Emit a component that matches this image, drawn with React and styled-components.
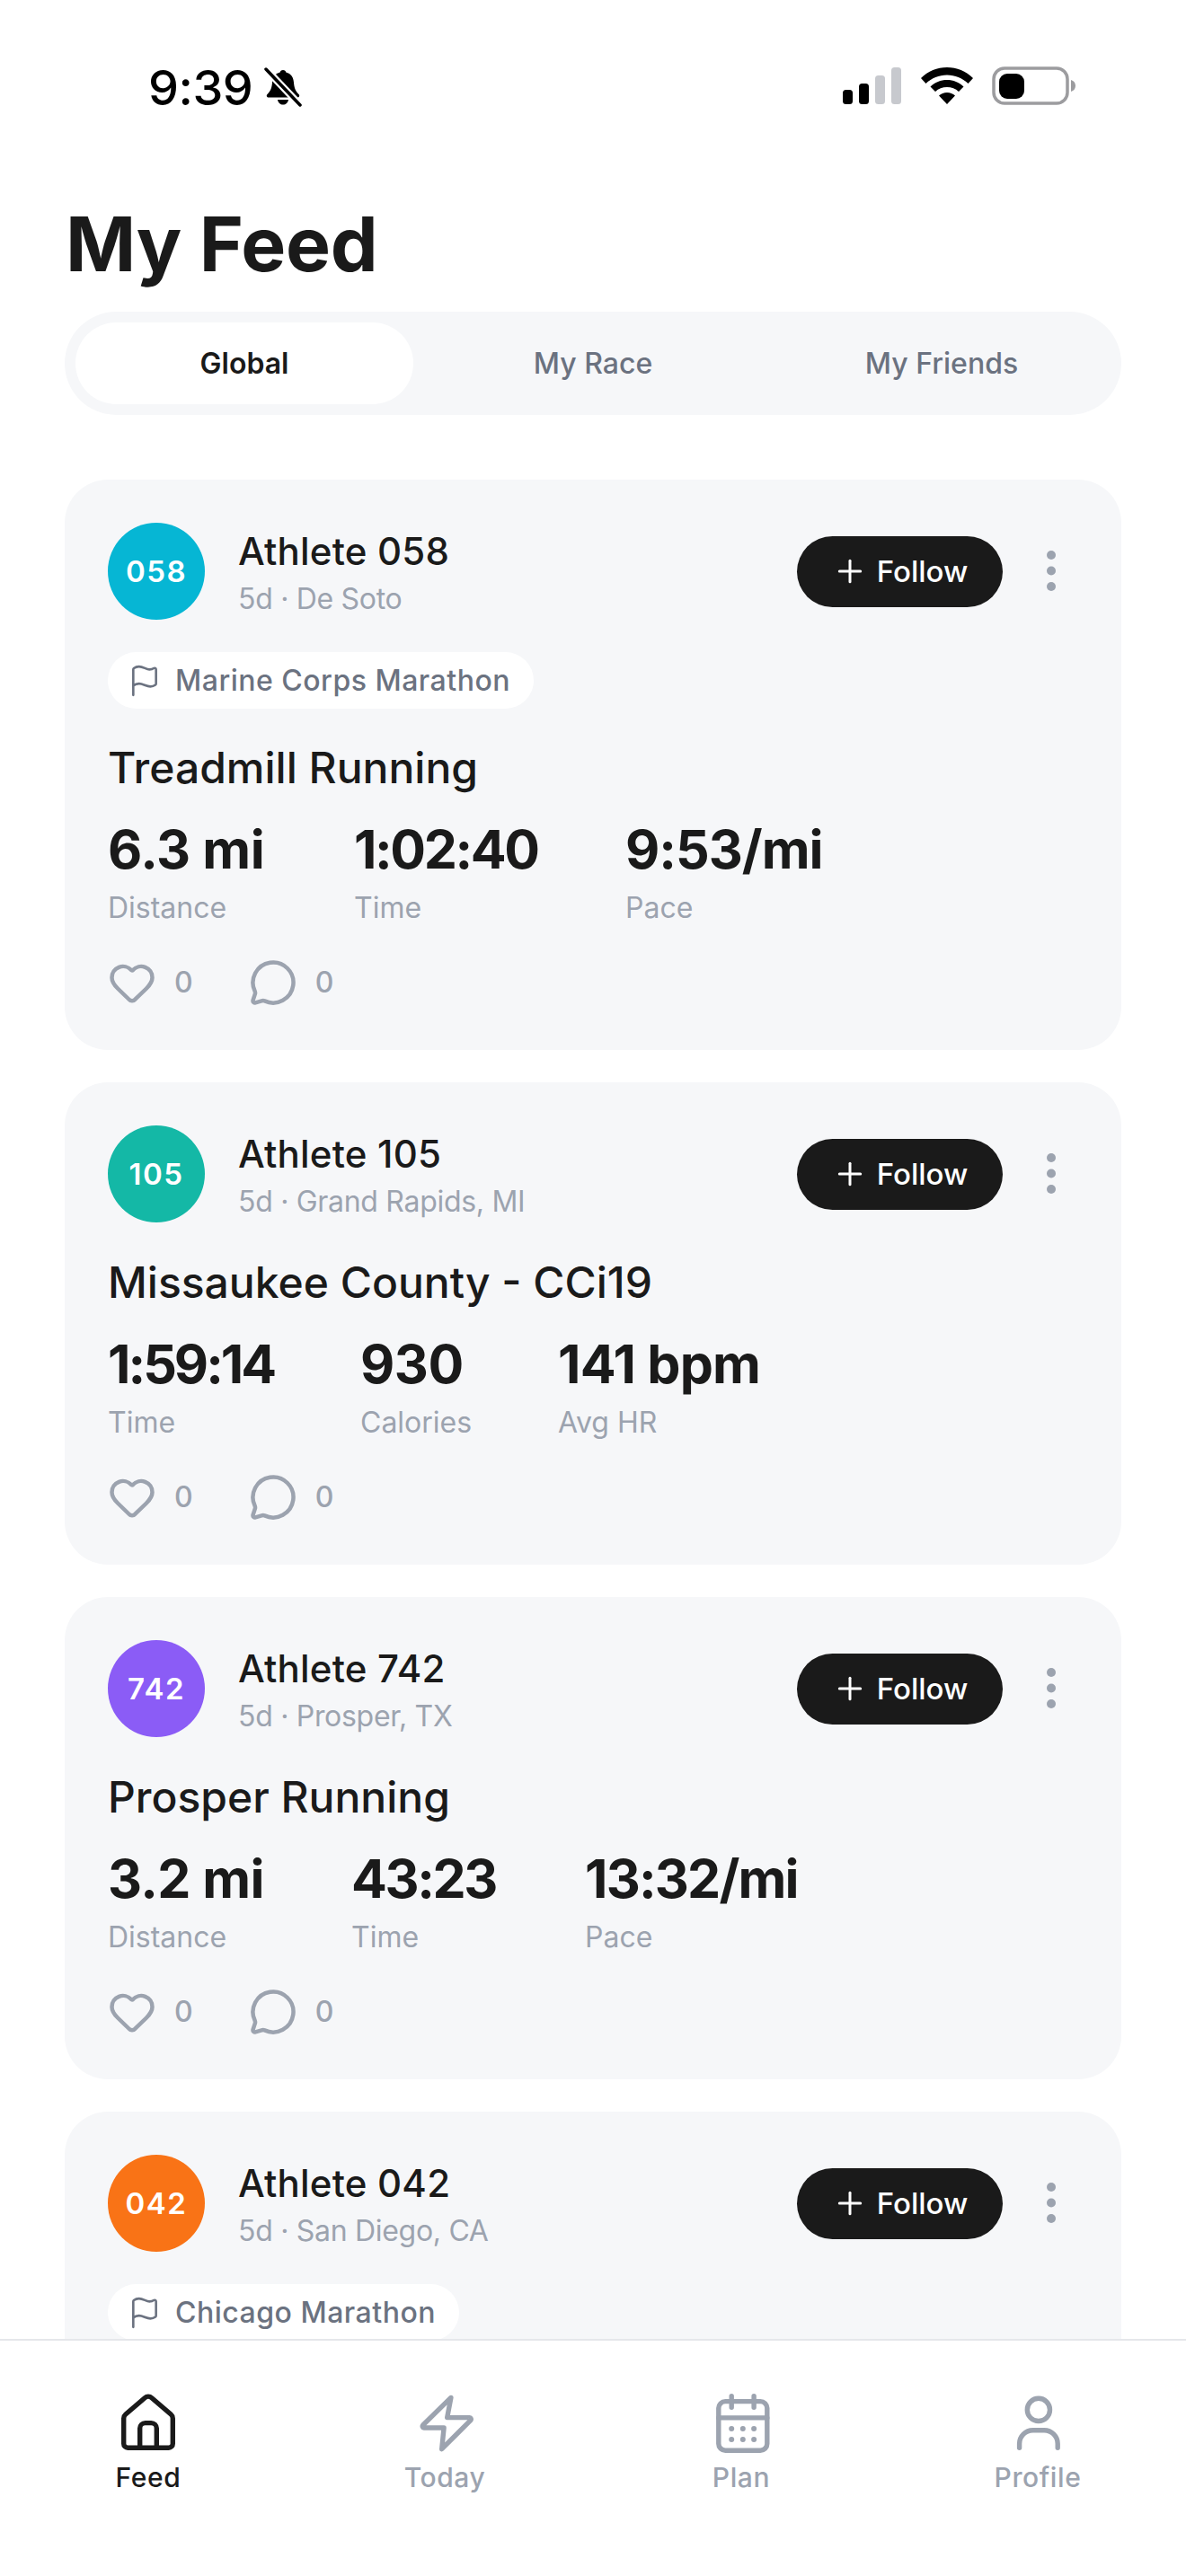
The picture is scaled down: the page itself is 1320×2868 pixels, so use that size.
import React from 'react';
import styled, { createGlobalStyle } from 'styled-components';
import { Flag, Heart, MessageCircle, Plus } from 'lucide-react';

const GlobalStyle = createGlobalStyle`
  html, body { margin: 0; padding: 0; background: #fff; }
  body { font-family: Inter, "Noto Sans", sans-serif; color: #1a1a1a; }
  * { box-sizing: border-box; }
`;

const Screen = styled.div`
  width: 1320px;
  height: 2868px;
  display: flex;
  flex-direction: column;
  overflow: hidden;
  background: #fff;
`;

const StatusBar = styled.div`
  height: 130px;
  flex: none;
  padding: 70px 122px 0 165px;
  display: flex;
  justify-content: space-between;
  align-items: flex-start;
`;

const Time = styled.div`
  display: flex;
  align-items: center;
  gap: 13px;
  font-size: 54px;
  line-height: 56px;
  font-weight: 500;
  letter-spacing: -0.5px;
  color: #000;
`;

const StatusIcons = styled.div`
  display: flex;
  align-items: center;
  gap: 21px;
  padding-top: 4px;
`;

const Title = styled.h1`
  margin: 112px 0 0 73px;
  height: 60px;
  font-size: 84px;
  line-height: 60px;
  font-weight: 700;
  letter-spacing: -0.3px;
  color: #1a1a1a;
`;

const Tabs = styled.div`
  margin: 45px 72px 0;
  height: 115px;
  flex: none;
  padding: 12px;
  border-radius: 58px;
  background: #f6f7f9;
  display: grid;
  grid-template-columns: repeat(3, 1fr);
  gap: 12px;
`;

const Tab = styled.div`
  display: flex;
  align-items: center;
  justify-content: center;
  border-radius: 46px;
  font-size: 32px;
  font-weight: ${({ $active }) => ($active ? 600 : 500)};
  color: ${({ $active }) => ($active ? '#1a1a1a' : '#6b7280')};
  background: ${({ $active }) => ($active ? '#fff' : 'transparent')};
`;

const Feed = styled.div`
  flex: 1;
  min-height: 0;
  margin-top: 72px;
  padding: 0 72px;
  display: flex;
  flex-direction: column;
  gap: 36px;
  overflow: hidden;
`;

const Card = styled.article`
  flex: none;
  padding: 48px;
  border-radius: 48px;
  background: #f6f7f9;
`;

const CardHead = styled.div`
  display: flex;
  align-items: center;
`;

const Avatar = styled.div`
  width: 108px;
  height: 108px;
  flex: none;
  border-radius: 50%;
  display: flex;
  align-items: center;
  justify-content: center;
  font-size: 33px;
  font-weight: 600;
  letter-spacing: 1.5px;
  color: #fff;
  background: ${({ $color }) => $color};
`;

const Who = styled.div`
  flex: 1;
  margin-left: 37px;
  padding-top: 4px;
`;

const Name = styled.div`
  font-size: 42px;
  line-height: 50px;
  font-weight: 500;
  letter-spacing: 0.2px;
  color: #1a1a1a;
`;

const Meta = styled.div`
  margin-top: 7px;
  font-size: 32px;
  line-height: 42px;
  letter-spacing: -0.3px;
  color: #9ca3af;
`;

const FollowButton = styled.button`
  width: 229px;
  height: 79px;
  border: 0;
  border-radius: 40px;
  background: #1a1a1a;
  color: #fff;
  display: flex;
  align-items: center;
  justify-content: center;
  gap: 10px;
  font-family: inherit;
  font-size: 33px;
  font-weight: 500;
  padding: 0;
`;

const MoreButton = styled.div`
  width: 60px;
  margin-left: 24px;
  display: flex;
  justify-content: center;
`;

const RaceChip = styled.div`
  margin-top: 36px;
  height: 63px;
  width: fit-content;
  padding: 0 26px 0 22px;
  border-radius: 32px;
  background: #fff;
  display: flex;
  align-items: center;
  gap: 15px;
  font-size: 32px;
  font-weight: 500;
  letter-spacing: 0.5px;
  color: #6b7280;
`;

const WorkoutTitle = styled.h2`
  margin: ${({ $afterChip }) => ($afterChip ? '37px' : '38px')} 0 0;
  font-size: 48px;
  line-height: 58px;
  font-weight: 500;
  letter-spacing: 0;
  color: #1a1a1a;
`;

const Stats = styled.div`
  margin-top: 28px;
  display: grid;
  grid-template-columns: ${({ $columns }) => $columns};
`;

const Stat = styled.div`
  display: flex;
  flex-direction: column;
`;

const StatValue = styled.div`
  font-size: 59px;
  line-height: 68px;
  font-weight: 700;
  letter-spacing: ${({ $tracking }) => $tracking}px;
  color: #1a1a1a;
`;

const StatLabel = styled.div`
  margin-top: 11px;
  font-size: 32px;
  line-height: 40px;
  color: #9ca3af;
`;

const Actions = styled.div`
  margin-top: 36px;
  display: flex;
  align-items: center;
  gap: 62px;
`;

const Action = styled.div`
  display: flex;
  align-items: center;
  gap: 20px;
  font-size: 32px;
  line-height: 54px;
  font-weight: 500;
  color: #9ca3af;
`;

const BottomNav = styled.nav`
  flex: none;
  height: 264px;
  border-top: 2px solid #e5e7eb;
  background: #fff;
  display: grid;
  grid-template-columns: repeat(4, 1fr);
  align-items: start;
  padding-top: 55px;
`;

const NavItem = styled.div`
  display: flex;
  flex-direction: column;
  align-items: center;
  gap: 5px;
  color: ${({ $active }) => ($active ? '#1a1a1a' : '#9ca3af')};
`;

const NavLabel = styled.span`
  font-size: 30px;
  line-height: 40px;
  font-weight: 500;
  letter-spacing: 0.6px;
`;

const NavSvg = ({ children }) => (
  <svg width="72" height="72" viewBox="0 0 24 24" fill="none" stroke="currentColor" strokeWidth="1.8" strokeLinecap="round" strokeLinejoin="round">
    {children}
  </svg>
);

const HomeIcon = () => (
  <NavSvg>
    <path d="M2.900 10.500a2 2 0 0 1 .7-1.500L10.700 2.900a2 2 0 0 1 2.600 0L20.400 9a2 2 0 0 1 .7 1.500V19.900a1.500 1.500 0 0 1-1.500 1.500H4.400a1.500 1.500 0 0 1-1.500-1.500z" />
    <path d="M8.900 21.400V14.200a2 2 0 0 1 2-2h2.200a2 2 0 0 1 2 2V21.400" />
  </NavSvg>
);

const BoltIcon = () => (
  <NavSvg>
    <path d="M14.300 2.800 3.900 13a.6.6 0 0 0 .4 1H11.700L10.900 21.900 21.600 11.200a.6.6 0 0 0-.4-1H12.900z" />
  </NavSvg>
);

const CalendarIcon = () => (
  <NavSvg>
    <rect x="3.600" y="4.200" width="18" height="18.200" rx="2.500" />
    <path d="M8.400 2.200v4.200M16.700 2.200v4.200M3.600 10.300h18" />
    <g fill="currentColor" stroke="none">
      <circle cx="8.400" cy="14.300" r="1" />
      <circle cx="12.600" cy="14.300" r="1" />
      <circle cx="16.700" cy="14.300" r="1" />
      <circle cx="8.400" cy="18.300" r="1" />
      <circle cx="12.600" cy="18.300" r="1" />
      <circle cx="16.700" cy="18.300" r="1" />
    </g>
  </NavSvg>
);

const PersonIcon = () => (
  <NavSvg>
    <circle cx="12.300" cy="7.300" r="4.200" />
    <path d="M5.200 21.400v-1.500a5 5 0 0 1 5-5h4.200a5 5 0 0 1 5 5v1.500" />
  </NavSvg>
);

const BellOff = () => (
  <svg width="42" height="46" viewBox="0 0 42 46">
    <path fill="#000" d="M21 3c2 0 3 1.200 3.300 2.600C30 7 32.500 11 33 17c.4 5 1.500 9 5.500 13 1.500 1.500.5 3.500-1.500 3.500H5c-2 0-3-2-1.500-3.500C7.500 26 8.600 22 9 17c.5-6 3-10 8.700-11.400C18 4.200 19 3 21 3z" />
    <path fill="#000" d="M15 36h12c-.5 3.500-3 5.500-6 5.500s-5.500-2-6-5.500z" />
    <path stroke="#fff" strokeWidth="8" d="M2 2l38 40" />
    <path stroke="#000" strokeWidth="3.500" strokeLinecap="round" d="M2 2l38 40" />
  </svg>
);

const SignalIcon = () => (
  <svg width="66" height="42" viewBox="0 0 66 42">
    <rect x="0" y="25" width="11" height="16" rx="3.500" fill="#000" />
    <rect x="18" y="18" width="11" height="23" rx="3.500" fill="#000" />
    <rect x="36" y="9" width="11" height="32" rx="3.500" fill="#c7c9ce" />
    <rect x="54" y="0" width="11" height="41" rx="3.500" fill="#c7c9ce" />
  </svg>
);

const WifiIcon = () => (
  <svg width="58" height="42" viewBox="0 0 58 42">
    <path fill="#000" d="M29 0c11 0 21 4 29 12l-5.500 6C46 12 38 8.500 29 8.500S12 12 5.500 18L0 12C8 4 18 0 29 0z" />
    <path fill="#000" d="M29 14c7 0 13.500 2.500 18.500 7.500L42 27c-3.500-3.200-8-5-13-5s-9.500 1.800-13 5l-5.500-5.500C15.500 16.500 22 14 29 14z" />
    <path fill="#000" d="M29 28c3.500 0 6.500 1.200 9 3.500L29 41l-9-9.500c2.500-2.300 5.500-3.500 9-3.500z" />
  </svg>
);

const BatteryIcon = () => (
  <svg width="94" height="44" viewBox="0 0 94 44">
    <rect x="2" y="2" width="82" height="39" rx="12" fill="#fff" stroke="#9c9c9f" strokeWidth="3.500" />
    <rect x="8" y="8" width="28" height="28" rx="9" fill="#000" />
    <path d="M88 15c3 1 5 3 5 6.500S91 27 88 28z" fill="#9c9c9f" />
  </svg>
);

const DotsIcon = () => (
  <svg width="12" height="48" viewBox="0 0 12 48" fill="#9ca3af">
    <circle cx="6" cy="6" r="5" />
    <circle cx="6" cy="23.500" r="5" />
    <circle cx="6" cy="41" r="5" />
  </svg>
);

// the card below the fold only shows its head and race chip
const posts = [
  {
    id: '058',
    color: '#06b6d4',
    meta: '5d · De Soto',
    race: 'Marine Corps Marathon',
    title: 'Treadmill Running',
    columns: '274px 302px auto',
    stats: [['6.3 mi', 'Distance', -0.4], ['1:02:40', 'Time', -2.4], ['9:53/mi', 'Pace', -1]],
  },
  {
    id: '105',
    color: '#14b8a6',
    meta: '5d · Grand Rapids, MI',
    title: 'Missaukee County - CCi19',
    columns: '281px 220px auto',
    stats: [['1:59:14', 'Time', -3], ['930', 'Calories', -0.5], ['141 bpm', 'Avg HR', -0.8]],
  },
  {
    id: '742',
    color: '#8b5cf6',
    meta: '5d · Prosper, TX',
    title: 'Prosper Running',
    columns: '271px 260px auto',
    stats: [['3.2 mi', 'Distance', -0.6], ['43:23', 'Time', -2.4], ['13:32/mi', 'Pace', -1.8]],
  },
  {
    id: '042',
    color: '#f97316',
    meta: '5d · San Diego, CA',
    race: 'Chicago Marathon',
  },
];

const tabs = ['Global', 'My Race', 'My Friends'];

const navItems = [
  { label: 'Feed', Icon: HomeIcon, active: true },
  { label: 'Today', Icon: BoltIcon },
  { label: 'Plan', Icon: CalendarIcon },
  { label: 'Profile', Icon: PersonIcon },
];

const App = () => {
  return (
    <Screen>
      <GlobalStyle />
      <StatusBar>
        <Time>
          9:39
          <BellOff />
        </Time>
        <StatusIcons>
          <SignalIcon />
          <WifiIcon />
          <BatteryIcon />
        </StatusIcons>
      </StatusBar>
      <Title>My Feed</Title>
      <Tabs>
        {tabs.map((t, i) => (
          <Tab key={t} $active={i === 0}>{t}</Tab>
        ))}
      </Tabs>
      <Feed>
        {posts.map((p) => (
          <Card key={p.id}>
            <CardHead>
              <Avatar $color={p.color}>{p.id}</Avatar>
              <Who>
                <Name>Athlete {p.id}</Name>
                <Meta>{p.meta}</Meta>
              </Who>
              <FollowButton>
                <Plus size={40} strokeWidth={3} absoluteStrokeWidth />
                Follow
              </FollowButton>
              <MoreButton><DotsIcon /></MoreButton>
            </CardHead>
            {p.race && (
              <RaceChip>
                <Flag size={38} strokeWidth={2.6} absoluteStrokeWidth />
                {p.race}
              </RaceChip>
            )}
            {p.title && (
              <>
                <WorkoutTitle $afterChip={Boolean(p.race)}>{p.title}</WorkoutTitle>
                <Stats $columns={p.columns}>
                  {p.stats.map(([value, label, tracking]) => (
                    <Stat key={label}>
                      <StatValue $tracking={tracking}>{value}</StatValue>
                      <StatLabel>{label}</StatLabel>
                    </Stat>
                  ))}
                </Stats>
                <Actions>
                  <Action><Heart size={54} strokeWidth={4.500} absoluteStrokeWidth />0</Action>
                  <Action><MessageCircle size={54} strokeWidth={4.500} absoluteStrokeWidth />0</Action>
                </Actions>
              </>
            )}
          </Card>
        ))}
      </Feed>
      <BottomNav>
        {navItems.map(({ label, Icon, active }) => (
          <NavItem key={label} $active={active}>
            <Icon />
            <NavLabel>{label}</NavLabel>
          </NavItem>
        ))}
      </BottomNav>
    </Screen>
  );
};

export default App;
